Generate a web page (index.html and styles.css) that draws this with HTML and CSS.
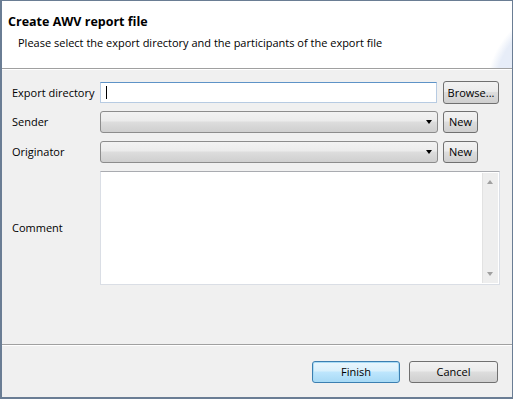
FILE: index.html
```html
<!DOCTYPE html>
<html lang="en">

<head>
    <meta charset="UTF-8">
    <title>Create AWV report file</title>
    <link rel="stylesheet" href="styles.css">
</head>

<body>
    <div class="window">
        <header class="banner">
            <h1>Create AWV report file</h1>
            <p>Please select the export directory and the participants of the export file</p>
        </header>

        <main class="form">
            <div class="row first">
                <label for="dir">Export directory</label>
                <div class="text-field"><span class="caret"></span></div>
                <button class="btn browse">Browse...</button>
            </div>
            <div class="row">
                <label>Sender</label>
                <div class="combo"><span class="arrow"></span></div>
                <button class="btn small">New</button>
            </div>
            <div class="row">
                <label>Originator</label>
                <div class="combo"><span class="arrow"></span></div>
                <button class="btn small">New</button>
            </div>
            <div class="row comment-row">
                <label>Comment</label>
                <div class="memo">
                    <div class="scrollbar">
                        <span class="up"></span>
                        <span class="down"></span>
                    </div>
                </div>
            </div>
        </main>

        <footer class="actions">
            <button class="btn wide default">Finish</button>
            <button class="btn wide">Cancel</button>
        </footer>
    </div>
</body>

</html>
```

FILE: styles.css
```css
/* Basic Reset */
html,
body {
    margin: 0;
    padding: 0;
    background: #f0f0f0;
    font-family: 'Open Sans', 'Noto Sans', sans-serif;
    font-size: 11px;
    color: #000000;
}

/* Window frame */
.window {
    width: 513px;
    height: 399px;
    box-sizing: border-box;
    border: 1px solid #6a7d94;
    border-left-width: 2px;
    border-bottom-width: 2px;
    display: flex;
    flex-direction: column;
    background: #f0f0f0;
}

/* Title banner */
.banner {
    height: 68px;
    flex-shrink: 0;
    box-sizing: border-box;
    padding: 13px 0 0 6px;
    border-bottom: 1px solid #a0a0a0;
    background:
        radial-gradient(ellipse 90px 140px at 565px 100px, #dbe3f3 60%, rgba(219, 227, 243, 0) 64%),
        radial-gradient(ellipse 150px 130px at 595px 90px, #e7edf8 68%, rgba(255, 255, 255, 0) 74%),
        #ffffff;
}

.banner h1 {
    margin: 0;
    font-size: 12.5px;
    font-weight: 700;
    line-height: 16px;
}

.banner p {
    margin: 6px 0 0 10px;
    line-height: 14px;
}

/* Form rows */
.form {
    flex: 1;
    padding: 11px 11px 0 10px;
    border-top: 1px solid #ffffff;
}

.row {
    display: flex;
    align-items: center;
    margin-top: 8px;
}

.row.first {
    margin-top: 0;
    margin-bottom: -1px;
}

.row label {
    width: 88px;
    flex-shrink: 0;
    white-space: nowrap;
    line-height: 14px;
}

.text-field {
    width: 337px;
    height: 21px;
    box-sizing: border-box;
    border: 1px solid #b7cbe2;
    border-top-color: #5e93c7;
    background: #ffffff;
    padding: 3px 0 0 5px;
}

.caret {
    display: block;
    width: 1px;
    height: 13px;
    background: #000000;
}

.combo {
    position: relative;
    width: 338px;
    height: 22px;
    box-sizing: border-box;
    border: 1px solid #8c8c8c;
    border-radius: 3px;
    background: linear-gradient(#f2f2f2 0%, #ebebeb 45%, #dddddd 50%, #cfcfcf 100%);
}

.arrow {
    position: absolute;
    right: 5px;
    top: 8px;
    width: 0;
    height: 0;
    border-left: 3.5px solid transparent;
    border-right: 3.5px solid transparent;
    border-top: 4px solid #000000;
}

/* Buttons */
.btn {
    font-family: inherit;
    font-size: 11px;
    color: #000000;
    height: 22px;
    box-sizing: border-box;
    padding: 0;
    margin-left: 5px;
    border: 1px solid #707070;
    border-radius: 3px;
    background: linear-gradient(#f2f2f2 0%, #ebebeb 45%, #dddddd 50%, #cfcfcf 100%);
    line-height: 18px;
}

.browse {
    width: 56px;
    height: 23px;
    margin-left: 6px;
}

.small {
    width: 35px;
}

/* Comment area */
.memo {
    position: relative;
    width: 400px;
    height: 114px;
    box-sizing: border-box;
    border: 1px solid #dadee5;
    border-top-color: #a9abb0;
    background: #ffffff;
}

.scrollbar {
    position: absolute;
    top: 1px;
    right: 1px;
    bottom: 1px;
    width: 15px;
    background: #eeeeee;
    border-left: 1px solid #e2e2e2;
}

.scrollbar .up,
.scrollbar .down {
    position: absolute;
    left: 4px;
    width: 0;
    height: 0;
    border-left: 3.5px solid transparent;
    border-right: 3.5px solid transparent;
}

.scrollbar .up {
    top: 7px;
    border-bottom: 4px solid #a0a0a0;
}

.scrollbar .down {
    bottom: 7px;
    border-top: 4px solid #a0a0a0;
}

/* Footer buttons */
.actions {
    height: 53px;
    flex-shrink: 0;
    box-sizing: border-box;
    border-top: 1px solid #a0a0a0;
    box-shadow: inset 0 1px 0 #ffffff;
    display: flex;
    justify-content: flex-end;
    align-items: flex-start;
    padding: 16px 14px 0 0;
}

.wide {
    height: 22px;
    margin-left: 9px;
}

.default {
    width: 88px;
    border-color: #3c7fb1;
    box-shadow: inset 0 0 0 1px #a9dcf6;
    background: linear-gradient(#eaf6fd 0%, #d9f0fc 45%, #bee6fd 50%, #a7d9f5 100%);
}

.default + .wide {
    width: 89px;
}
```
